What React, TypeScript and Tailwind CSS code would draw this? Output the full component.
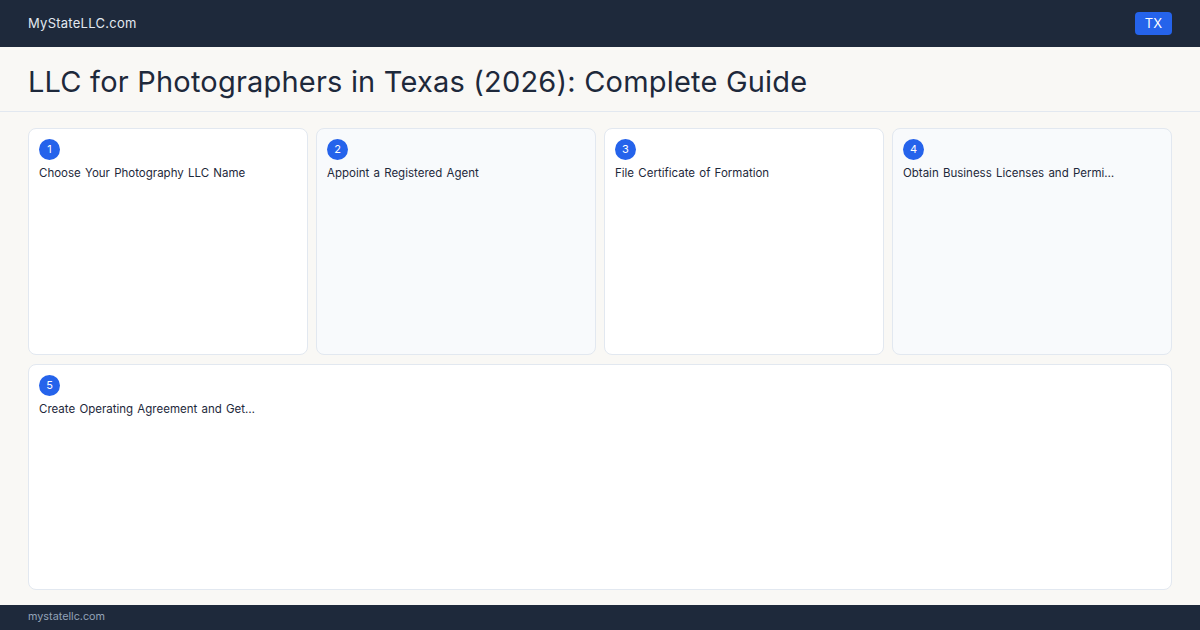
export default function App() {
  const steps = [
    { n: 1, title: "Choose Your Photography LLC Name", alt: false },
    { n: 2, title: "Appoint a Registered Agent", alt: true },
    { n: 3, title: "File Certificate of Formation", alt: false },
    { n: 4, title: "Obtain Business Licenses and Permi…", alt: true },
  ];
  const font = { fontFamily: "Inter, 'Noto Sans', sans-serif" };
  return (
    <div className="w-[1200px] h-[630px] flex flex-col bg-[#f9f8f5] overflow-hidden" style={font}>
      <header className="h-[47px] shrink-0 bg-[#1e293b] flex items-center justify-between px-[28px]">
        <span className="text-[13px] tracking-[0.02em] text-[#e2e8f0]">MyStateLLC.com</span>
        <span className="h-[23px] px-[10px] rounded-[4px] bg-[#2563eb] text-white text-[13px] flex items-center">TX</span>
      </header>
      <div className="h-[65px] shrink-0 border-b border-[#e2e8f0] flex items-center px-[28px]">
        <h1 className="text-[29px] text-[#1e293b] tracking-[0.2px] leading-none pt-[4px]">
          LLC for Photographers in Texas (2026): Complete Guide
        </h1>
      </div>
      <main className="flex-1 grid grid-cols-4 grid-rows-2 gap-x-2 gap-y-[9px] px-[28px] pt-[16px] pb-[15px]">
        {steps.map((s) => (
          <div
            key={s.n}
            className={`rounded-[8px] border border-[#e2e8f0] p-[10px] ${s.alt ? "bg-[#f8fafc]" : "bg-white"}`}
          >
            <Badge n={s.n} />
            <p className="mt-[5px] text-[11.5px] text-[#1e293b] [word-spacing:1px]">{s.title}</p>
          </div>
        ))}
        <div className="col-span-4 rounded-[8px] border border-[#e2e8f0] bg-white p-[10px]">
          <Badge n={5} />
          <p className="mt-[5px] text-[11.5px] text-[#1e293b] [word-spacing:1px]">Create Operating Agreement and Get…</p>
        </div>
      </main>
      <footer className="h-[25px] shrink-0 bg-[#1e293b] flex items-center px-[28px]">
        <span className="text-[10.8px] text-[#94a3b8]">mystatellc.com</span>
      </footer>
    </div>
  );
}

function Badge({ n }: { n: number }) {
  return (
    <div className="w-[21px] h-[21px] rounded-full bg-[#2563eb] text-white text-[11px] flex items-center justify-center">
      {n}
    </div>
  );
}
